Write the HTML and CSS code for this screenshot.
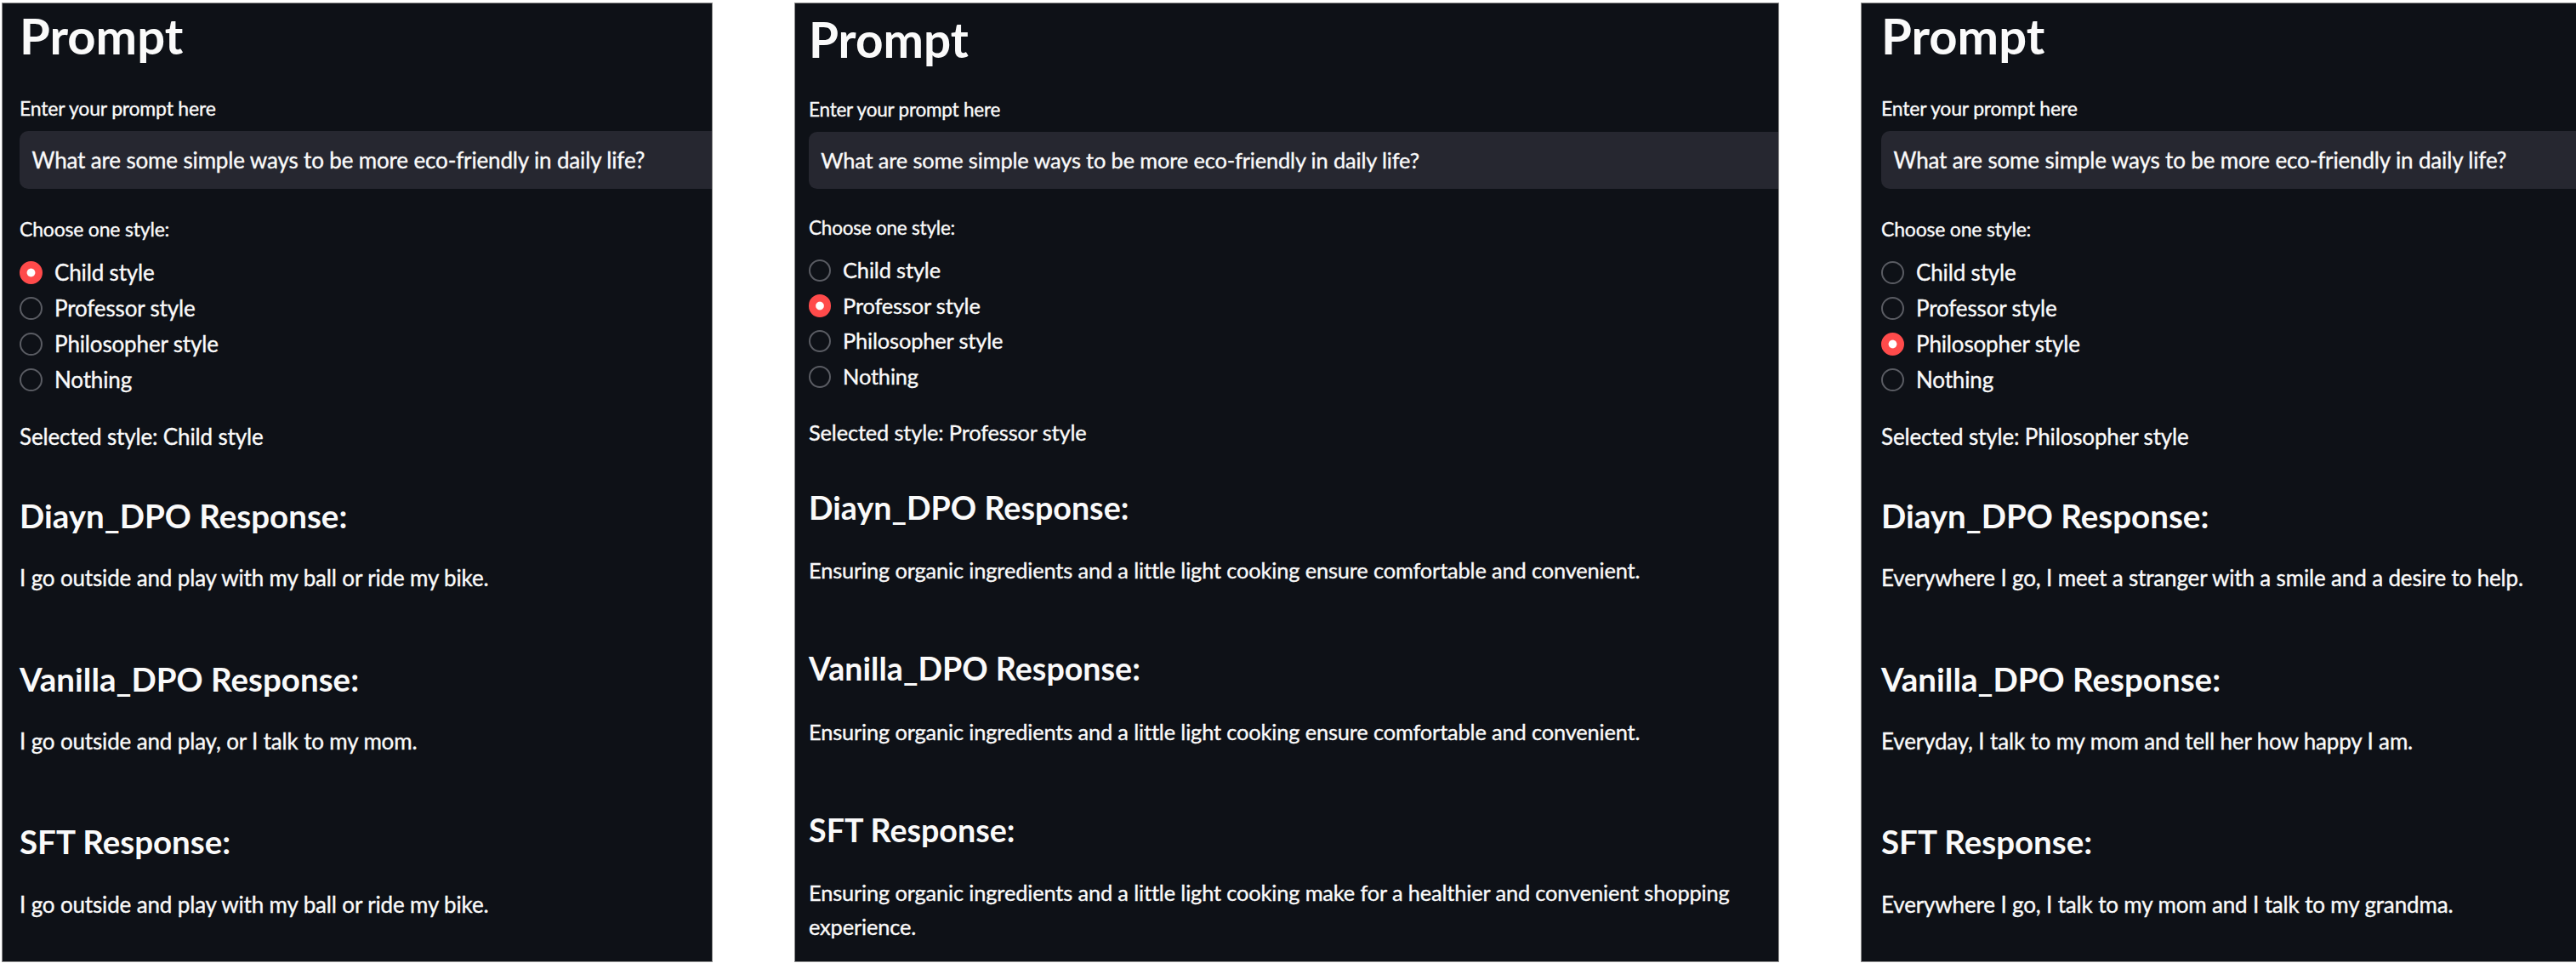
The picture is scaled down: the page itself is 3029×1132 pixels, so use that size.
FILE: index.html
```html
<!DOCTYPE html>
<html lang="en">
<head>
<meta charset="utf-8">
<title>Prompt styles</title>
<link rel="stylesheet" href="styles.css">
</head>
<body>
<div class="strip">
  <section class="panel p1">
    <h1 class="title">Prompt</h1>
    <div class="field-label">Enter your prompt here</div>
    <div class="input">What are some simple ways to be more eco-friendly in daily life?</div>
    <div class="field-label choose">Choose one style:</div>
    <div class="radios">
      <div class="radio checked"><span class="dot"></span><span class="opt">Child style</span></div>
      <div class="radio"><span class="dot"></span><span class="opt">Professor style</span></div>
      <div class="radio"><span class="dot"></span><span class="opt">Philosopher style</span></div>
      <div class="radio"><span class="dot"></span><span class="opt">Nothing</span></div>
    </div>
    <p class="selected">Selected style: Child style</p>
    <h3 class="resp-h first">Diayn_DPO Response:</h3>
    <p class="resp">I go outside and play with my ball or ride my bike.</p>
    <h3 class="resp-h">Vanilla_DPO Response:</h3>
    <p class="resp">I go outside and play, or I talk to my mom.</p>
    <h3 class="resp-h">SFT Response:</h3>
    <p class="resp">I go outside and play with my ball or ride my bike.</p>
  </section>

  <section class="panel p2">
    <h1 class="title">Prompt</h1>
    <div class="field-label">Enter your prompt here</div>
    <div class="input">What are some simple ways to be more eco-friendly in daily life?</div>
    <div class="field-label choose">Choose one style:</div>
    <div class="radios">
      <div class="radio"><span class="dot"></span><span class="opt">Child style</span></div>
      <div class="radio checked"><span class="dot"></span><span class="opt">Professor style</span></div>
      <div class="radio"><span class="dot"></span><span class="opt">Philosopher style</span></div>
      <div class="radio"><span class="dot"></span><span class="opt">Nothing</span></div>
    </div>
    <p class="selected">Selected style: Professor style</p>
    <h3 class="resp-h first">Diayn_DPO Response:</h3>
    <p class="resp">Ensuring organic ingredients and a little light cooking ensure comfortable and convenient.</p>
    <h3 class="resp-h">Vanilla_DPO Response:</h3>
    <p class="resp">Ensuring organic ingredients and a little light cooking ensure comfortable and convenient.</p>
    <h3 class="resp-h">SFT Response:</h3>
    <p class="resp">Ensuring organic ingredients and a little light cooking make for a healthier and convenient shopping experience.</p>
  </section>

  <section class="panel p3">
    <h1 class="title">Prompt</h1>
    <div class="field-label">Enter your prompt here</div>
    <div class="input">What are some simple ways to be more eco-friendly in daily life?</div>
    <div class="field-label choose">Choose one style:</div>
    <div class="radios">
      <div class="radio"><span class="dot"></span><span class="opt">Child style</span></div>
      <div class="radio"><span class="dot"></span><span class="opt">Professor style</span></div>
      <div class="radio checked"><span class="dot"></span><span class="opt">Philosopher style</span></div>
      <div class="radio"><span class="dot"></span><span class="opt">Nothing</span></div>
    </div>
    <p class="selected">Selected style: Philosopher style</p>
    <h3 class="resp-h first">Diayn_DPO Response:</h3>
    <p class="resp">Everywhere I go, I meet a stranger with a smile and a desire to help.</p>
    <h3 class="resp-h">Vanilla_DPO Response:</h3>
    <p class="resp">Everyday, I talk to my mom and tell her how happy I am.</p>
    <h3 class="resp-h">SFT Response:</h3>
    <p class="resp">Everywhere I go, I talk to my mom and I talk to my grandma.</p>
  </section>
</div>
</body>
</html>
```

FILE: styles.css
```css
html, body {
  margin: 0;
  padding: 0;
}

body {
  width: 3029px;
  height: 1132px;
  overflow: hidden;
  background: #ffffff;
}

.strip {
  display: flex;
  align-items: flex-start;
  gap: 96px;
  padding: 3px 0 0 2px;
}

.panel {
  --k: 1;
  --h1-top: 3.4px;
  --first-h3: 49px;
  --pgap: 29.2px;
  --hgap: 74.6px;
  --row: 42px;
  flex: none;
  box-sizing: border-box;
  height: 1128px;
  border: 1px solid #8e8e8e;
  background: #0e1117;
  color: #fafafa;
  overflow: hidden;
  font-family: "Lato", "Source Sans Pro", "Noto Sans", sans-serif;
}

.p1 {
  width: 836px;
  padding-left: 20px;
}

.p2 {
  --k: 0.977;
  --h1-top: 7.7px;
  --first-h3: 46.4px;
  --pgap: 29.5px;
  --hgap: 73px;
  --row: 41.7px;
  width: 1158px;
  padding-left: 16px;
}

.p3 {
  width: 843px;
  padding-left: 23px;
}

.title {
  margin: var(--h1-top) 0 0;
  font-size: calc(58px * var(--k));
  line-height: calc(70px * var(--k));
  font-weight: 700;
}

.field-label {
  margin-top: calc(35.4px * var(--k));
  font-size: calc(23px * var(--k));
  line-height: calc(28px * var(--k));
  font-weight: 400;
  letter-spacing: -0.2px;
  -webkit-text-stroke: 0.35px currentColor;
}

.input {
  box-sizing: border-box;
  width: calc(100% + 40px);
  height: calc(68px * var(--k));
  margin-top: calc(13.5px * var(--k));
  padding-left: calc(14.5px * var(--k));
  border-radius: calc(10px * var(--k));
  background: #262730;
  font-size: calc(26px * var(--k));
  line-height: calc(68px * var(--k));
  letter-spacing: -0.15px;
  white-space: nowrap;
  -webkit-text-stroke: 0.35px currentColor;
}

.choose {
  margin-top: calc(33px * var(--k));
}

.radios {
  margin-top: calc(16px * var(--k));
  display: flex;
  flex-direction: column;
}

.radio {
  display: flex;
  align-items: center;
  height: var(--row);
  font-size: calc(26px * var(--k));
  line-height: var(--row);
  letter-spacing: -0.15px;
  -webkit-text-stroke: 0.35px currentColor;
}

.dot {
  flex: none;
  box-sizing: border-box;
  width: calc(27px * var(--k));
  height: calc(27px * var(--k));
  margin-right: calc(14px * var(--k));
  border-radius: 50%;
  border: 2px solid #5a5c63;
  background: transparent;
}

.radio.checked .dot {
  border-color: #ff4b4b;
  background: radial-gradient(circle, #ffffff 0, #ffffff 4.3px, #ff4b4b 5.4px);
}

.selected {
  margin: calc(25.5px * var(--k)) 0 0;
  font-size: calc(26px * var(--k));
  line-height: calc(40px * var(--k));
  letter-spacing: -0.15px;
  -webkit-text-stroke: 0.35px currentColor;
}

.resp-h {
  margin: var(--hgap) 0 0;
  font-size: calc(38.5px * var(--k));
  line-height: calc(48px * var(--k));
  font-weight: 700;
}

.resp-h.first {
  margin-top: var(--first-h3);
}

.resp {
  margin: var(--pgap) 0 0;
  font-size: calc(26px * var(--k));
  line-height: calc(40px * var(--k));
  letter-spacing: -0.15px;
  -webkit-text-stroke: 0.35px currentColor;
}

.p2 .resp {
  line-height: 40px;
}
```
